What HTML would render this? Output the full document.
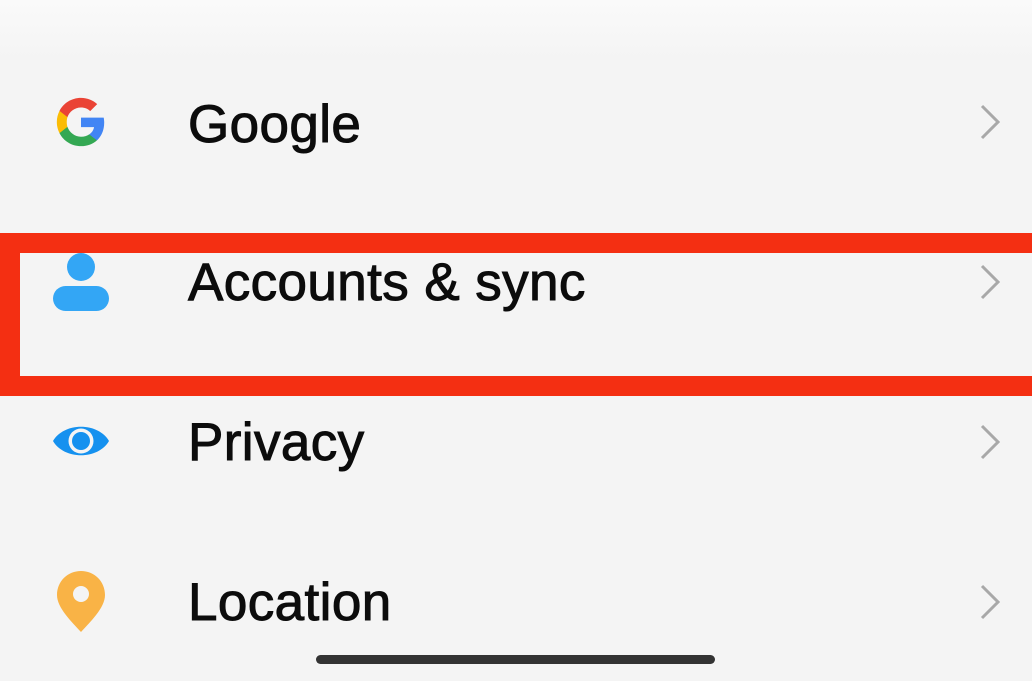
<!DOCTYPE html>
<html><head><style>
html,body{margin:0;padding:0}
body{width:1032px;height:681px;background:#f4f4f4;position:relative;overflow:hidden;font-family:"Liberation Sans",sans-serif}
.t{position:absolute;left:188px;font-size:53px;line-height:53px;color:#0c0c0c;-webkit-text-stroke:1px #0c0c0c;letter-spacing:0.4px;white-space:nowrap}
.chev{position:absolute;left:978px}
svg{position:absolute}
</style></head><body>
<div style="position:absolute;left:0;top:0;width:1032px;height:60px;background:linear-gradient(#fafafa,#f4f4f4)"></div>

<svg style="left:52px;top:93px" width="58" height="58" viewBox="0 0 24 24">
<path d="M21.6 12.2c0-.7-.1-1.4-.2-2H12v3.9h5.4c-.2 1.2-.9 2.3-2 3v2.5h3.2c1.9-1.7 3-4.3 3-7.4z" fill="#4285F4"/>
<path d="M12 22c2.7 0 5-.9 6.6-2.4l-3.2-2.5c-.9.6-2 1-3.4 1-2.6 0-4.8-1.8-5.6-4.1H3.1v2.6C4.7 19.8 8.1 22 12 22z" fill="#34A853"/>
<path d="M6.4 14c-.2-.6-.3-1.3-.3-2s.1-1.4.3-2V7.4H3.1C2.4 8.8 2 10.3 2 12s.4 3.2 1.1 4.6L6.4 14z" fill="#FBBC05"/>
<path d="M12 6c1.5 0 2.8.5 3.8 1.5l2.9-2.9C17 3 14.7 2 12 2 8.1 2 4.7 4.2 3.1 7.4L6.4 10C7.2 7.7 9.4 6 12 6z" fill="#EA4335"/>
</svg>
<div class="t" style="top:98px">Google</div>
<svg class="chev" style="top:104px" width="24" height="36"><path d="M4 2 L20 18 L4 34" fill="none" stroke="#a8a8a8" stroke-width="3"/></svg>

<div style="position:absolute;left:0;top:233px;width:1050px;height:163px;box-sizing:border-box;border:20px solid #f42f12;border-right:none"></div>
<svg style="left:50px;top:250px" width="62" height="64"><circle cx="31" cy="17" r="14" fill="#33a6f5"/><rect x="3" y="36" width="56" height="25" rx="12.5" fill="#33a6f5"/></svg>
<div class="t" style="top:256px">Accounts &amp; sync</div>
<svg class="chev" style="top:264px" width="24" height="36"><path d="M4 2 L20 18 L4 34" fill="none" stroke="#a8a8a8" stroke-width="3"/></svg>

<svg style="left:52px;top:419px" width="58" height="44" viewBox="0 0 58 44"><path d="M1 22 C12 3 46 3 57 22 C46 41 12 41 1 22Z" fill="#1591ef"/><circle cx="29" cy="22" r="12.5" fill="#f4f4f4"/><circle cx="29" cy="22" r="9" fill="#1591ef"/></svg>
<div class="t" style="top:416px">Privacy</div>
<svg class="chev" style="top:424px" width="24" height="36"><path d="M4 2 L20 18 L4 34" fill="none" stroke="#a8a8a8" stroke-width="3"/></svg>

<svg style="left:56px;top:570px" width="50" height="64" viewBox="0 0 50 64"><path d="M25 1 C12 1 1 11 1 25 C1 38 16 52 25 62 C34 52 49 38 49 25 C49 11 38 1 25 1Z" fill="#f9b346"/><circle cx="25" cy="24" r="8" fill="#f4f4f4"/></svg>
<div class="t" style="top:576px">Location</div>
<svg class="chev" style="top:584px" width="24" height="36"><path d="M4 2 L20 18 L4 34" fill="none" stroke="#a8a8a8" stroke-width="3"/></svg>

<div style="position:absolute;left:316px;top:655px;width:399px;height:9px;border-radius:5px;background:#333"></div>
</body></html>
